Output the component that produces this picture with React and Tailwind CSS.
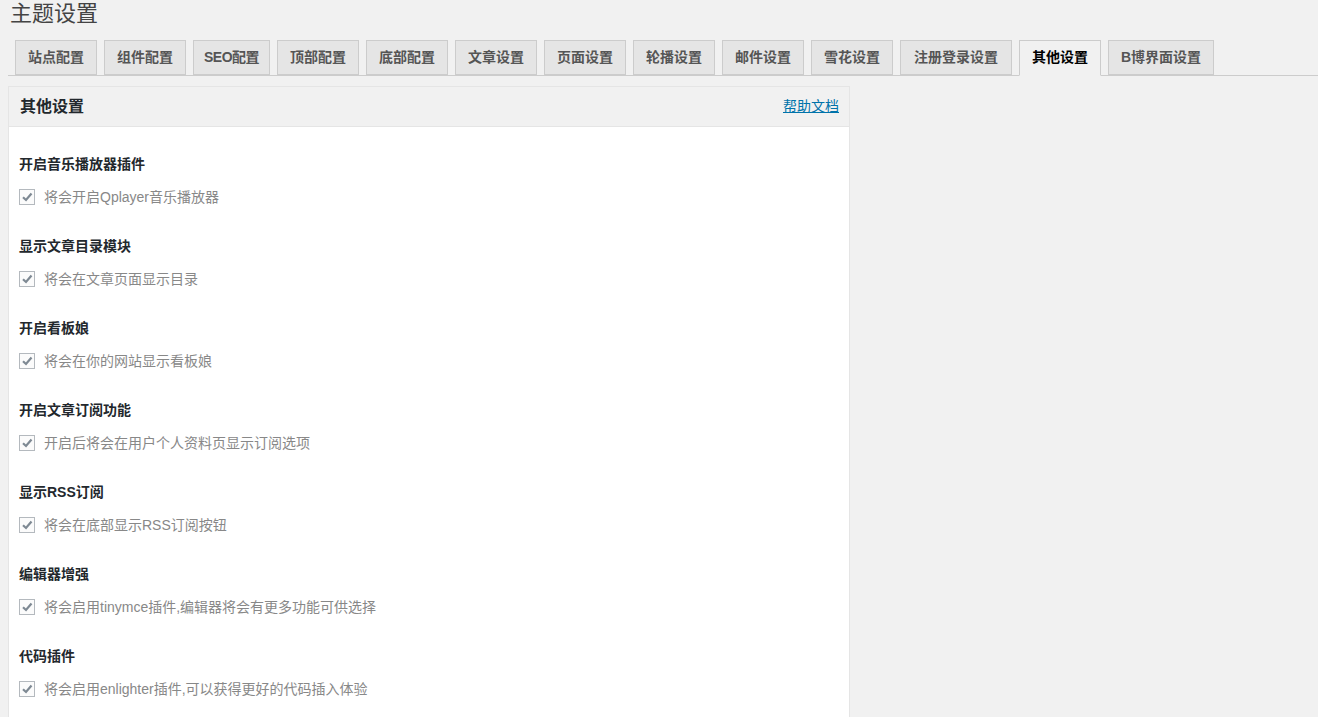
import React from "react";

const tabs = ["站点配置","组件配置","SEO配置","顶部配置","底部配置","文章设置","页面设置","轮播设置","邮件设置","雪花设置","注册登录设置","其他设置","B博界面设置"];

const items = [
  ["开启音乐播放器插件", "将会开启Qplayer音乐播放器"],
  ["显示文章目录模块", "将会在文章页面显示目录"],
  ["开启看板娘", "将会在你的网站显示看板娘"],
  ["开启文章订阅功能", "开启后将会在用户个人资料页显示订阅选项"],
  ["显示RSS订阅", "将会在底部显示RSS订阅按钮"],
  ["编辑器增强", "将会启用tinymce插件,编辑器将会有更多功能可供选择"],
  ["代码插件", "将会启用enlighter插件,可以获得更好的代码插入体验"],
];

const font = { fontFamily: '"Liberation Sans", "Noto Sans CJK SC", sans-serif' };

function Check() {
  return (
    <span className="flex h-[16px] w-[16px] shrink-0 items-center justify-center border border-[#b4b9be] bg-[#fbfbfb]">
      <svg width="12" height="12" viewBox="0 0 12 12">
        <polyline points="2,6.2 5,9 10.5,2.5" fill="none" stroke="#7e8993" strokeWidth="2.2" />
      </svg>
    </span>
  );
}

export default function App() {
  return (
    <div className="min-h-[717px] w-[1318px] overflow-hidden bg-[#f1f1f1] text-[#23282d]" style={font}>
      <div className="h-[30px] pl-[10px] text-[22px] leading-[28px] font-normal text-[#444]">主题设置</div>
      <div className="mt-[10px] ml-[8px] flex border-b border-[#ccc] h-[36px]">
        {tabs.map((t) => {
          const active = t === "其他设置";
          const seo = t === "SEO配置";
          const reg = t === "注册登录设置";
          return (
            <div
              key={t}
              className={
                active
                  ? "ml-[7px] h-[36px] border border-[#ccc] border-b-[#f1f1f1] bg-[#f1f1f1] px-[12px] text-[14px] font-bold leading-[33px] text-black"
                  : seo
                  ? "ml-[7px] h-[35px] w-[77px] whitespace-nowrap border border-[#ccc] bg-[#e5e5e5] text-center text-[14px] font-bold leading-[33px] tracking-[-0.5px] text-[#555]"
                  : reg
                  ? "ml-[7px] h-[35px] border border-[#ccc] bg-[#e5e5e5] px-[13px] text-[14px] font-bold leading-[33px] text-[#555]"
                  : "ml-[7px] h-[35px] border border-[#ccc] bg-[#e5e5e5] px-[12px] text-[14px] font-bold leading-[33px] text-[#555]"
              }
            >
              {t}
            </div>
          );
        })}
      </div>
      <div className="ml-[8px] mt-[10px] w-[842px] border border-[#e5e5e5] bg-white">
        <div className="flex h-[40px] items-center justify-between border-b border-[#e5e5e5] bg-[#f1f1f1] pl-[11px] pr-[10px]">
          <span className="text-[16px] font-bold text-[#23282d]">其他设置</span>
          <a className="text-[14px] text-[#0073aa] underline" href="#">帮助文档</a>
        </div>
        <div className="px-[10px] pt-[27px]">
          {items.map(([h, l]) => (
            <div key={h} className="pb-[29px]">
              <div className="h-[20px] text-[14px] font-bold leading-[20px] text-[#23282d]">{h}</div>
              <div className="mt-[13px] flex h-[20px] items-center gap-[9px]">
                <Check />
                <span className="text-[14px] leading-[20px] text-[#888]">{l}</span>
              </div>
            </div>
          ))}
        </div>
      </div>
    </div>
  );
}
